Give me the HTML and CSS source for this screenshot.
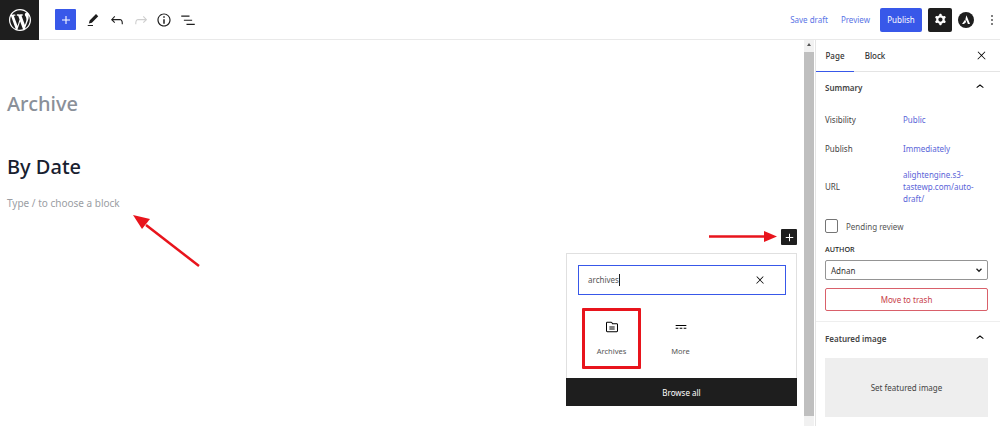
FILE: index.html
```html
<!DOCTYPE html>
<html lang="en">
<head>
<meta charset="utf-8">
<title>Archive</title>
<link rel="stylesheet" href="styles.css">
</head>
<body>
<header class="topbar">
  <a class="wp-logo"><svg viewBox="0 0 20 20" width="22" height="22"><path fill="#fff" d="M20 10c0-5.51-4.5-10-10-10C4.48 0 0 4.49 0 10c0 5.52 4.48 10 10 10 5.5 0 10-4.48 10-10zM7.78 15.37L4.37 6.22c.55-.02 1.17-.08 1.17-.08.5-.06.44-1.13-.06-1.11 0 0-1.45.11-2.37.11-.18 0-.37 0-.58-.01C4.12 2.69 6.87 1.11 10 1.11c2.33 0 4.45.87 6.05 2.34-.68-.11-1.65.39-1.65 1.58 0 .74.45 1.36.9 2.1.35.61.55 1.36.55 2.46 0 1.49-1.4 5-1.4 5l-3.03-8.37c.54-.02.82-.17.82-.17.5-.05.44-1.25-.06-1.22 0 0-1.44.12-2.38.12-.87 0-2.33-.12-2.33-.12-.5-.03-.56 1.2-.06 1.22l.92.08 1.26 3.41zM17.41 10c.24-.64.74-1.87.43-4.25.7 1.29 1.05 2.71 1.05 4.25 0 3.29-1.73 6.24-4.4 7.78.97-2.59 1.94-5.2 2.92-7.78zM6.1 18.09C3.12 16.65 1.11 13.53 1.11 10c0-1.3.23-2.48.72-3.59C3.25 10.3 4.67 14.2 6.1 18.09zm4.03-6.63l2.58 6.98c-.86.29-1.76.45-2.71.45-.79 0-1.57-.11-2.29-.33.81-2.38 1.62-4.74 2.42-7.1z"/></svg></a>
  <div class="tools">
    <span class="tool-plus"><svg viewBox="0 0 24 24" width="16" height="16"><path fill="#fff" d="M18 11.2h-5.2V6h-1.6v5.2H6v1.6h5.2V18h1.6v-5.2H18z"/></svg></span>
    <svg class="tool" viewBox="0 0 24 24" width="18" height="18"><path d="m19 7-3-3-8.5 8.5-1 4 4-1L19 7Zm-7 11.5H5V20h7v-1.5Z"/></svg>
    <svg class="tool" viewBox="0 0 24 24" width="18" height="18"><path d="M18.3 11.7c-.6-.6-1.4-.9-2.3-.9H6.7l2.9-3.3-1.1-1-4.5 5L8.5 16l1-1-2.7-2.7H16c.5 0 .9.2 1.3.5 1 1 1 3.4 1 4.5v.3h1.5v-.2c0-1.5 0-4.3-1.5-5.7z"/></svg>
    <svg class="tool tool-off" viewBox="0 0 24 24" width="18" height="18"><path d="M15.6 6.5l-1.1 1 2.9 3.3H8c-.9 0-1.7.3-2.3.9-1.4 1.5-1.4 4.2-1.4 5.6v.2h1.5v-.3c0-1.1 0-3.5 1-4.5.3-.3.7-.5 1.3-.5h9.2L14.5 15l1.1 1.1 4.6-4.6-4.6-5z"/></svg>
    <svg class="tool" viewBox="0 0 24 24" width="18" height="18"><path d="M12 3.2c-4.8 0-8.8 3.9-8.8 8.8 0 4.8 3.9 8.8 8.8 8.8 4.8 0 8.8-3.9 8.8-8.8 0-4.8-4-8.8-8.8-8.8zm0 16c-4 0-7.2-3.3-7.2-7.2C4.8 8 8 4.8 12 4.8s7.2 3.3 7.2 7.2c0 4-3.2 7.2-7.2 7.2zM11 17h2v-6h-2v6zm0-8h2V7h-2v2z"/></svg>
    <svg class="tool" viewBox="0 0 24 24" width="18" height="18"><path d="M3 6h11v1.5H3V6Zm3.5 5.5h11V13h-11v-1.5ZM21 17H10v1.500h11V17Z"/></svg>
  </div>
  <div class="actions">
    <a class="link-btn save">Save draft</a>
    <a class="link-btn preview">Preview</a>
    <a class="publish">Publish</a>
    <span class="settings"><svg viewBox="0 0 24 24" width="17" height="17"><path fill="#fff" fill-rule="evenodd" d="M10.289 4.836A1 1 0 0 1 11.275 4h1.306a1 1 0 0 1 .987.836l.244 1.466c.787.26 1.503.679 2.108 1.218l1.393-.522a1 1 0 0 1 1.216.437l.653 1.13a1 1 0 0 1-.23 1.273l-1.148.944a6.025 6.025 0 0 1 0 2.435l1.149.946a1 1 0 0 1 .23 1.272l-.653 1.13a1 1 0 0 1-1.216.437l-1.394-.522c-.605.54-1.32.958-2.108 1.218l-.244 1.466a1 1 0 0 1-.987.836h-1.306a1 1 0 0 1-.986-.836l-.244-1.466a5.995 5.995 0 0 1-2.108-1.218l-1.394.522a1 1 0 0 1-1.217-.436l-.653-1.131a1 1 0 0 1 .23-1.272l1.149-.946a6.026 6.026 0 0 1 0-2.435l-1.148-.944a1 1 0 0 1-.23-1.272l.653-1.131a1 1 0 0 1 1.217-.437l1.393.522a5.994 5.994 0 0 1 2.108-1.218l.244-1.466ZM14.929 12a3 3 0 1 1-6 0 3 3 0 0 1 6 0Z"/></svg></span>
    <svg class="astra" viewBox="0 0 16 16" width="16" height="16"><circle cx="8" cy="8" r="8" fill="#1e1e1e"/><path fill="#fff" d="M8.4 3.2 12 12H9.9L8.9 9.3 7.4 7.2ZM7.2 7.6l1 2.4L6 12H4Z"/></svg>
    <svg class="more" viewBox="0 0 24 24" width="16" height="16"><path d="M13 19h-2v-2h2v2zm0-6h-2v-2h2v2zm0-6h-2V5h2v2z"/></svg>
  </div>
</header>

<main class="layout">
  <section class="editor">
    <h1 class="post-title">Archive</h1>
    <h2 class="heading">By Date</h2>
    <p class="placeholder">Type / to choose a block</p>
  </section>

  <div class="scrollbar"><span class="scroll-up"></span><span class="scroll-thumb"></span></div>

  <aside class="sidebar">
    <div class="tabs">
      <span class="tab active">Page</span>
      <span class="tab">Block</span>
      <svg class="tab-close" viewBox="0 0 24 24" width="13" height="13"><path d="M13 11.8l6.1-6.3-1-1-6.1 6.2-6.1-6.2-1 1 6.1 6.3-6.5 6.7 1 1 6.5-6.6 6.5 6.6 1-1z"/></svg>
    </div>
    <section class="panel">
      <div class="panel-head"><span>Summary</span><svg viewBox="0 0 24 24" width="16" height="16"><path d="M6.5 12.4L12 8l5.5 4.4-.9 1.2L12 10l-4.5 3.6-1-1.2z"/></svg></div>
      <div class="row row-vis"><span class="row-label">Visibility</span><a class="row-value">Public</a></div>
      <div class="row row-pub"><span class="row-label">Publish</span><a class="row-value">Immediately</a></div>
      <div class="row row-url"><span class="row-label">URL</span><a class="row-value">alightengine.s3-tastewp.com/auto-draft/</a></div>
      <label class="pending"><span class="checkbox"></span>Pending review</label>
      <div class="author-label">AUTHOR</div>
      <div class="select"><span>Adnan</span><svg viewBox="0 0 24 24" width="10" height="10"><path d="M18 9 12 15 6 9" fill="none" stroke="#1e1e1e" stroke-width="3"/></svg></div>
      <a class="trash">Move to trash</a>
    </section>
    <section class="panel panel-image">
      <div class="panel-head"><span>Featured image</span><svg viewBox="0 0 24 24" width="16" height="16"><path d="M6.5 12.4L12 8l5.5 4.4-.9 1.2L12 10l-4.5 3.6-1-1.2z"/></svg></div>
      <div class="image-slot">Set featured image</div>
    </section>
  </aside>
</main>

<span class="inserter"><svg viewBox="0 0 24 24" width="15" height="15"><path fill="#fff" d="M18 11.2h-5.2V6h-1.6v5.2H6v1.6h5.2V18h1.6v-5.2H18z"/></svg></span>

<div class="popover">
  <div class="search"><span class="search-text">archives</span><svg viewBox="0 0 24 24" width="12" height="12"><path d="M13 11.8l6.1-6.3-1-1-6.1 6.2-6.1-6.2-1 1 6.1 6.3-6.5 6.7 1 1 6.5-6.6 6.5 6.6 1-1z"/></svg></div>
  <div class="results">
    <div class="result result-hit">
      <svg viewBox="0 0 24 24" width="16" height="16"><path d="M19 6.2h-5.9l-.6-1.1c-.3-.7-1-1.1-1.8-1.1H5c-1.100 0-2 .9-2 2v11.800c0 1.100.9 2 2 2h14c1.100 0 2-.9 2-2V8.200c0-1.100-.9-2-2-2zm.5 11.600c0 .3-.2.5-.5.5H5c-.3 0-.5-.2-.5-.5V6c0-.3.2-.5.5-.5h5.800c.2 0 .4.100.4.3l1 2H19c.3 0 .5.2.5.5v9.500zM8 12.800h8v-1.500H8v1.500zm0 3h8v-1.500H8v1.500z"/></svg>
      <span>Archives</span>
    </div>
    <div class="result">
      <svg viewBox="0 0 24 24" width="16" height="16"><path d="M4 9v1.500h16V9H4zm12 5.500h4V13h-4v1.500zm-6 0h4V13h-4v1.500zm-6 0h4V13H4v1.500z"/></svg>
      <span>More</span>
    </div>
  </div>
  <div class="browse">Browse all</div>
</div>

<svg class="annotations" viewBox="0 0 1000 426" width="1000" height="426">
  <path d="M199 266 146 225" stroke="#e8141c" stroke-width="2.5" fill="none"/>
  <path d="M133 215 150 219 142 229Z" fill="#e8141c"/>
  <path d="M709 236.5H766" stroke="#e8141c" stroke-width="2.5" fill="none"/>
  <path d="M777 236.5 764 231V242Z" fill="#e8141c"/>
</svg>
</body>
</html>
```
FILE: styles.css
```css
* { box-sizing: border-box; }
html, body { margin: 0; height: 426px; overflow: hidden; }
body { font-family: "Noto Sans", "Open Sans", sans-serif; background: #fff; color: #1e1e1e; font-size: 8px; position: relative; }
svg { display: block; flex: none; }

.topbar { height: 40px; display: flex; align-items: center; border-bottom: 1px solid #e9e9e9; }
.wp-logo { width: 39px; height: 40px; background: #1e1e1e; display: flex; align-items: center; justify-content: center; }
.tools { display: flex; align-items: center; margin-left: 16px; }
.tool-plus { width: 21px; height: 21px; background: #3858e9; border-radius: 1px; display: flex; align-items: center; justify-content: center; margin-right: 8px; }
.tool { margin-right: 5.8px; fill: #1e1e1e; }
.tool-off { fill: #cfcfcf; }
.actions { margin-left: auto; display: flex; align-items: center; }
.link-btn { color: #5a74e6; font-size: 8px; }
.save { margin-right: 13px; }
.preview { margin-right: 10px; }
.publish { width: 42px; height: 24px; background: #3858e9; color: #fff; border-radius: 2px; display: flex; align-items: center; justify-content: center; font-size: 8px; margin-right: 6px; }
.settings { width: 24px; height: 24px; background: #1e1e1e; border-radius: 2px; display: flex; align-items: center; justify-content: center; margin-right: 6px; }
.astra { margin-right: 10px; }

.layout { display: flex; height: 386px; }
.editor { flex: 1; padding: 50px 7px 0; min-width: 0; }
.post-title { margin: 0; font-size: 20px; line-height: 28px; font-weight: 500; color: #8a9099; }
.heading { margin: 35px 0 0; font-size: 20px; line-height: 28px; font-weight: 500; color: #18202f; }
.placeholder { margin: 15px 0 0; font-size: 10px; line-height: 14px; color: #9a9da3; }

.scrollbar { width: 10px; background: #f1f1f1; display: flex; flex-direction: column; margin-right: 1px; }
.scroll-up { height: 12px; position: relative; }
.scroll-up::after { content: ""; position: absolute; left: 3px; top: 3px; border-left: 2px solid transparent; border-right: 2px solid transparent; border-bottom: 3px solid #555; }
.scroll-thumb { height: 364px; background: #bfbfbf; }

.sidebar { width: 185px; border-left: 1px solid #e4e4e4; flex: none; }
.tabs { height: 32px; display: flex; align-items: center; border-bottom: 1px solid #e4e4e4; }
.tab { font-size: 8px; font-weight: 500; color: #333; height: 32px; line-height: 32px; width: 38px; text-align: center; }
.tab.active { border-bottom: 1.5px solid #3858e9; margin-right: 2px; }
.tab-close { margin-left: auto; margin-right: 12px; }
.panel { padding: 0 12px 10px 9px; border-bottom: 1px solid #eee; }
.panel-head { display: flex; justify-content: space-between; align-items: center; height: 32px; padding-bottom: 2px; font-size: 8px; font-weight: 600; color: #444; }
.row { display: flex; align-items: center; font-size: 8px; line-height: 12px; }
.row-label { width: 78px; flex: none; color: #444; }
.row-value { color: #5a65d8; }
.row-vis { margin-top: 10px; }
.row-pub { margin-top: 17px; }
.row-url { margin-top: 14px; }
.row-url .row-value { width: 80px; overflow-wrap: break-word; }
.pending { display: flex; align-items: center; margin-top: 14px; font-size: 8px; color: #555; }
.checkbox { width: 13px; height: 14px; border: 1px solid #757575; border-radius: 2px; margin-right: 8px; }
.author-label { margin-top: 11px; font-size: 7.2px; line-height: 11px; font-weight: 500; color: #1e1e1e; }
.select { margin-top: 5px; height: 20px; border: 1px solid #949494; border-radius: 2px; display: flex; align-items: center; justify-content: space-between; padding: 0 3px 0 5px; font-size: 8px; color: #333; }
.trash { margin-top: 8px; height: 23px; border: 1px solid #d9606a; border-radius: 2px; display: flex; align-items: center; justify-content: center; font-size: 8px; color: #c8404a; }
.panel-image { border-bottom: 0; padding-top: 1px; }
.image-slot { margin-top: 3px; height: 59px; background: #eee; display: flex; align-items: center; justify-content: center; font-size: 8px; color: #444; }

.inserter { position: absolute; left: 781px; top: 229px; width: 16px; height: 16px; background: #1e1e1e; border-radius: 1px; display: flex; align-items: center; justify-content: center; }
.popover { position: absolute; left: 566px; top: 253px; width: 231px; height: 153px; background: #fff; border: 1px solid #e0e0e0; display: flex; flex-direction: column; }
.search { margin: 11px 10px 0 11px; height: 30px; border: 1.5px solid #3858e9; display: flex; align-items: center; justify-content: space-between; padding: 0 19px 0 9px; font-size: 8px; color: #555; }
.search-text { border-right: 1px solid #1e1e1e; line-height: 12px; }
.results { display: flex; margin: 13px 0 0 15px; flex: 1; }
.result { width: 59px; height: 61px; display: flex; flex-direction: column; align-items: center; padding-top: 11px; font-size: 7.5px; color: #555; margin-right: 10px; }
.result span { margin-top: 11px; }
.result-hit { border: 3px solid #e8141c; padding-top: 8px; border-radius: 1px; }
.browse { height: 28px; margin: 0 -1px -1px; background: #1e1e1e; color: #fff; font-size: 8px; display: flex; align-items: center; justify-content: center; }
.annotations { position: absolute; left: 0; top: 0; pointer-events: none; }
```
